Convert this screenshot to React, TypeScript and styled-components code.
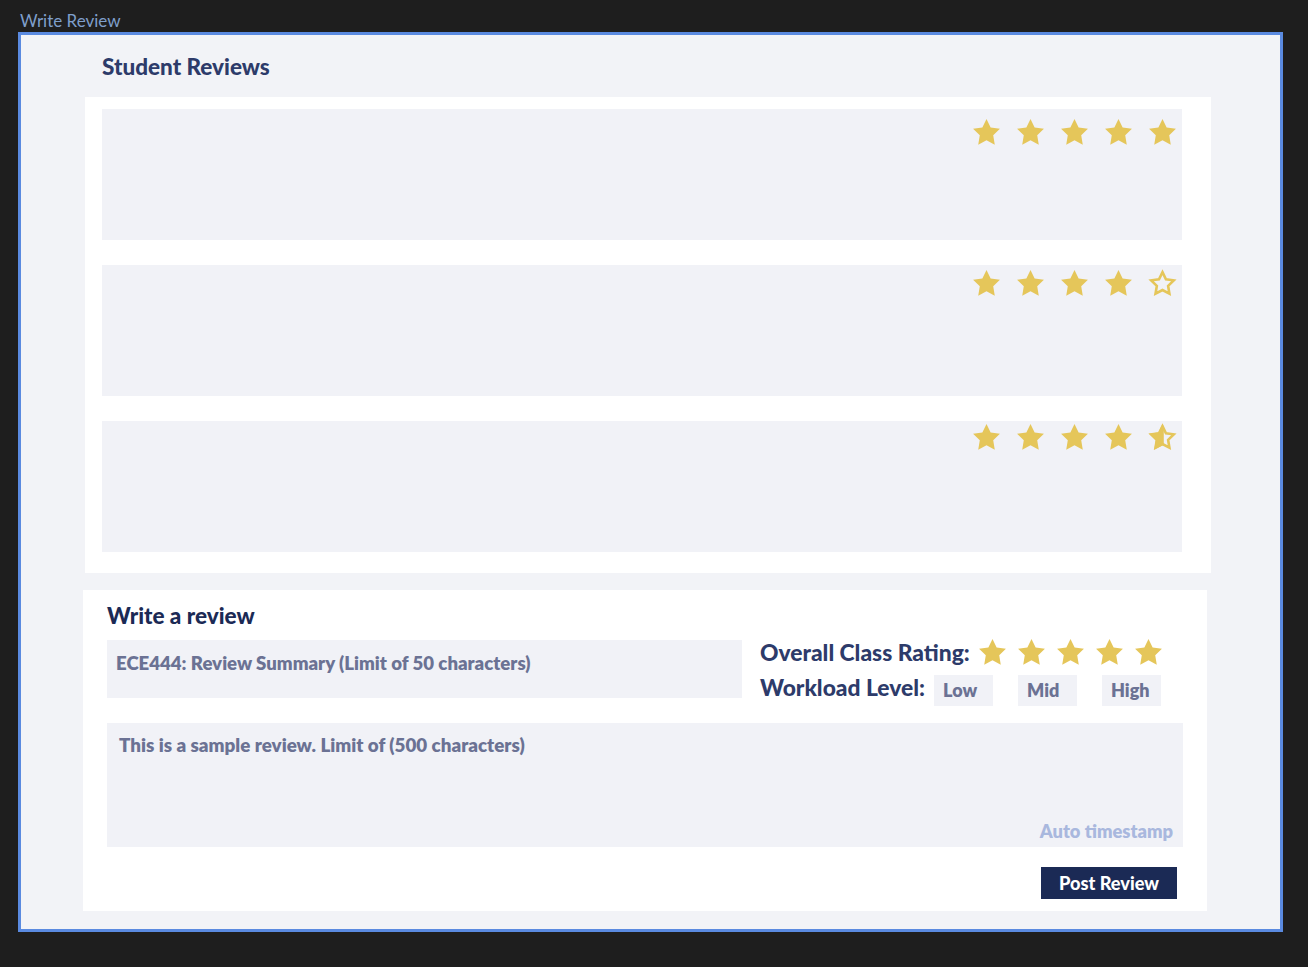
import React from "react";
import styled, { createGlobalStyle } from "styled-components";

const Global = createGlobalStyle`
  html, body { margin: 0; padding: 0; background: #1e1e1e; }
  body { font-family: "Lato", "Noto Sans", sans-serif; }
  * { box-sizing: border-box; }
`;

const Page = styled.div`
  width: 1308px;
  height: 967px;
  padding-left: 18px;
`;

const FrameLabel = styled.div`
  padding: 12px 0 0 2px;
  height: 32px;
  font-size: 17px;
  line-height: 18px;
  color: #7f9fcb;
`;

const Frame = styled.div`
  width: 1265px;
  height: 900px;
  border: 3px solid #5a8ae0;
  background: #f2f3f7;
  padding: 20px 0 0 62px;
  display: flex;
  flex-direction: column;
`;

const SectionTitle = styled.h2<{ $dark?: boolean }>`
  margin: 0;
  font-size: 22.5px;
  line-height: 24px;
  font-weight: 900;
  color: ${(p) => (p.$dark ? "#1b2a55" : "#2d3b6a")};
`;

const ReviewsTitle = styled(SectionTitle)`
  padding-left: 19px;
`;

const ReviewsPanel = styled.div`
  margin: 18px 0 0 2px;
  width: 1126px;
  height: 476px;
  background: #ffffff;
  padding: 12px 0 0 17px;
  display: flex;
  flex-direction: column;
  gap: 25px;
`;

const ReviewCard = styled.div<{ $top: number }>`
  width: 1080px;
  height: 131px;
  background: #f1f2f7;
  display: flex;
  justify-content: flex-end;
  align-items: flex-start;
  padding: ${(p) => p.$top}px 4px 0 0;
`;

const StarRow = styled.div<{ $gap: number }>`
  display: flex;
  gap: ${(p) => p.$gap}px;
`;

const WritePanel = styled.div`
  margin-top: 17px;
  width: 1124px;
  height: 321px;
  background: #ffffff;
  padding: 14px 24px 0 24px;
  display: flex;
  flex-direction: column;
`;

const FormRow = styled.div`
  display: flex;
  margin-top: 12px;
  gap: 18px;
`;

const SummaryField = styled.div`
  width: 635px;
  height: 58px;
  background: #f1f2f7;
  padding: 13px 0 0 9px;
  font-size: 18.6px;
  line-height: 20px;
  font-weight: 800;
  color: #6b7294;
`;

const MetaColumn = styled.div`
  display: flex;
  flex-direction: column;
  gap: 7px;
  margin-top: -2px;
`;

const MetaLine = styled.div`
  display: flex;
  align-items: center;
  height: 28px;
`;

const MetaLabel = styled.span<{ $w: number }>`
  font-size: 22.8px;
  font-weight: 900;
  color: #2d3b6a;
  width: ${(p) => p.$w}px;
  white-space: nowrap;
`;

const LevelGroup = styled.div`
  display: flex;
  gap: 25px;
  margin-top: 6px;
`;

const LevelButton = styled.div`
  width: 59px;
  height: 31px;
  background: #f1f2f7;
  display: flex;
  align-items: center;
  padding-left: 9px;
  font-size: 18px;
  font-weight: 800;
  color: #6b7294;
`;

const ReviewArea = styled.div`
  margin-top: 22px;
  width: 1076px;
  height: 124px;
  background: #f1f2f7;
  padding: 12px 10px 6px 12px;
  display: flex;
  flex-direction: column;
  justify-content: space-between;
`;

const ReviewText = styled.div`
  font-size: 18.8px;
  line-height: 20px;
  font-weight: 800;
  color: #6b7294;
`;

const Timestamp = styled.div`
  align-self: flex-end;
  font-size: 18.3px;
  line-height: 20px;
  font-weight: 800;
  color: #a9b8de;
`;

const Footer = styled.div`
  display: flex;
  justify-content: flex-end;
  margin-top: 20px;
  padding-right: 6px;
`;

const PostButton = styled.button`
  width: 136px;
  height: 32px;
  border: none;
  padding: 0;
  background: #1b2a55;
  color: #ffffff;
  font-family: "Lato", "Noto Sans", sans-serif;
  font-size: 18.2px;
  font-weight: 900;
  cursor: pointer;
`;

const STAR = "12,1.6 15.2,8.1 22.4,9.1 17.2,14.2 18.4,21.4 12,18 5.6,21.4 6.8,14.2 1.6,9.1 8.8,8.1";
const GOLD = "#e5c65a";

type Fill = "full" | "half" | "empty";

const Star: React.FC<{ fill: Fill; size?: number; id: string }> = ({ fill, size = 31, id }) => (
  <svg width={size} height={size} viewBox="0 0 24 24">
    {fill === "full" && <polygon points={STAR} fill={GOLD} />}
    {fill === "empty" && (
      <polygon points={STAR} fill="none" stroke={GOLD} strokeWidth={2.4} transform="translate(1.9 1.9) scale(0.84)" />
    )}
    {fill === "half" && (
      <>
        <defs>
          <clipPath id={id}>
            <rect x="0" y="0" width="13" height="24" />
          </clipPath>
        </defs>
        <polygon points={STAR} fill="none" stroke={GOLD} strokeWidth={2.4} transform="translate(1.9 1.9) scale(0.84)" />
        <polygon points={STAR} fill={GOLD} clipPath={`url(#${id})`} />
      </>
    )}
  </svg>
);

const Stars: React.FC<{ fills: Fill[]; gap: number; size?: number; prefix: string }> = ({ fills, gap, size, prefix }) => (
  <StarRow $gap={gap}>
    {fills.map((f, i) => (
      <Star key={i} fill={f} size={size} id={`${prefix}-${i}`} />
    ))}
  </StarRow>
);

const reviews: { fills: Fill[]; top: number }[] = [
  { fills: ["full", "full", "full", "full", "full"], top: 8 },
  { fills: ["full", "full", "full", "full", "empty"], top: 3 },
  { fills: ["full", "full", "full", "full", "half"], top: 1 },
];

export default function App() {
  return (
    <Page>
      <Global />
      <FrameLabel>Write Review</FrameLabel>
      <Frame>
        <ReviewsTitle>Student Reviews</ReviewsTitle>
        <ReviewsPanel>
          {reviews.map((r, i) => (
            <ReviewCard key={i} $top={r.top}>
              <Stars fills={r.fills} gap={13} prefix={`r${i}`} />
            </ReviewCard>
          ))}
        </ReviewsPanel>
        <WritePanel>
          <SectionTitle $dark>Write a review</SectionTitle>
          <FormRow>
            <SummaryField>ECE444: Review Summary (Limit of 50 characters)</SummaryField>
            <MetaColumn>
              <MetaLine>
                <MetaLabel $w={217}>Overall Class Rating:</MetaLabel>
                <Stars fills={["full", "full", "full", "full", "full"]} gap={8} prefix="o" />
              </MetaLine>
              <MetaLine>
                <MetaLabel $w={174}>Workload Level:</MetaLabel>
                <LevelGroup>
                  <LevelButton>Low</LevelButton>
                  <LevelButton>Mid</LevelButton>
                  <LevelButton>High</LevelButton>
                </LevelGroup>
              </MetaLine>
            </MetaColumn>
          </FormRow>
          <ReviewArea>
            <ReviewText>This is a sample review. Limit of (500 characters)</ReviewText>
            <Timestamp>Auto timestamp</Timestamp>
          </ReviewArea>
          <Footer>
            <PostButton>Post Review</PostButton>
          </Footer>
        </WritePanel>
      </Frame>
    </Page>
  );
}
